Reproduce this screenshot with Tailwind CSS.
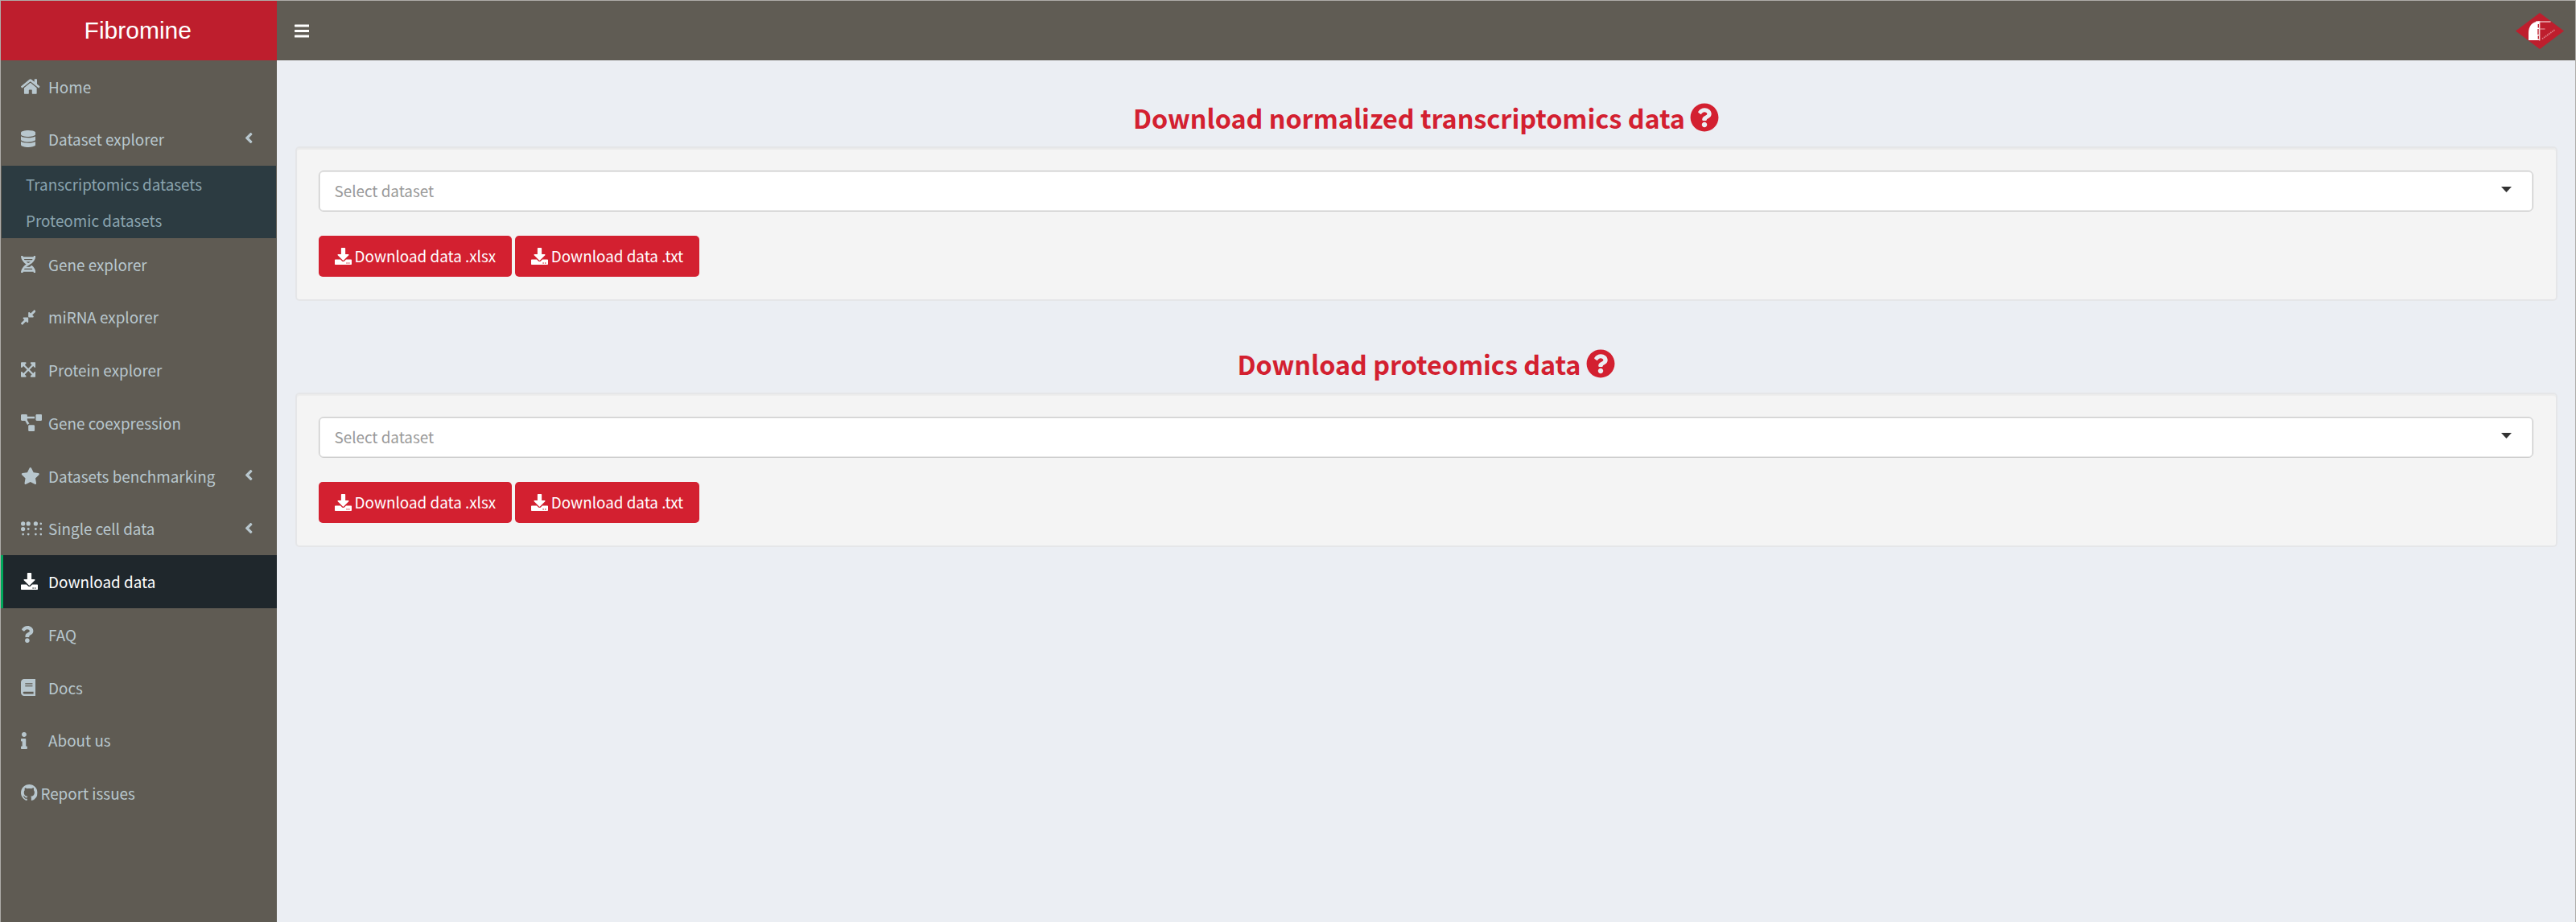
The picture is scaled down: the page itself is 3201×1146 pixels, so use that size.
<!DOCTYPE html>
<html lang="en">
<head>
<meta charset="utf-8">
<title>Fibromine</title>
<script src="https://cdn.jsdelivr.net/npm/@tailwindcss/browser@4"></script>
</head>
<body class="h-[1146px] w-[3201px] overflow-hidden bg-[#ebeef3] font-['Noto_Sans_CJK_SC',sans-serif] text-[18.85px]">
<svg class="hidden">
  <symbol id="home" viewBox="0 0 576 512"><path d="M280.37 148.26L96 300.11V464a16 16 0 0 0 16 16l112.06-.29a16 16 0 0 0 15.92-16V368a16 16 0 0 1 16-16h64a16 16 0 0 1 16 16v95.64a16 16 0 0 0 16 16.05L464 480a16 16 0 0 0 16-16V300L295.67 148.26a12.19 12.19 0 0 0-15.3 0zM571.6 251.47L488 182.56V44.05a12 12 0 0 0-12-12h-56a12 12 0 0 0-12 12v72.61L318.47 43a48 48 0 0 0-61 0L4.34 251.47a12 12 0 0 0-1.6 16.9l25.5 31A12 12 0 0 0 45.15 301l235.22-193.74a12.19 12.19 0 0 1 15.3 0L530.9 301a12 12 0 0 0 16.9-1.6l25.5-31a12 12 0 0 0-1.7-16.93z"/></symbol>
  <symbol id="database" viewBox="0 0 448 512"><path d="M448 73.143v45.714C448 159.143 347.667 192 224 192S0 159.143 0 118.857V73.143C0 32.857 100.333 0 224 0s224 32.857 224 73.143zM448 176v102.857C448 319.143 347.667 352 224 352S0 319.143 0 278.857V176c48.125 33.143 136.208 48.572 224 48.572S399.874 209.143 448 176zm0 160v102.857C448 479.143 347.667 512 224 512S0 479.143 0 438.857V336c48.125 33.143 136.208 48.572 224 48.572S399.874 369.143 448 336z"/></symbol>
  <symbol id="dna" viewBox="0 0 448 512"><path d="M.1 494.1c-1.1 9.5 6.3 17.8 15.9 17.8l32.3.1c8.1 0 14.9-5.9 16-13.9.7-4.9 1.8-11.1 3.4-18.1H380c1.6 6.9 2.9 13.2 3.5 18.1 1.1 8 7.9 14 16 13.9l32.3-.1c9.6 0 17.1-8.3 15.9-17.8-4.6-37.9-25.6-129-118.9-207.7-17.6 12.4-37.1 24.2-58.5 35.4 6.2 4.6 11.4 9.4 17 14.2H159.7c21.3-18.1 47-35.6 78.7-51.4C410.5 199.1 442.1 65.8 447.9 17.9 449 8.4 441.6.1 432 .1L399.6 0c-8.1 0-14.9 5.9-16 13.9-.7 4.9-1.8 11.1-3.4 18.1H67.8c-1.6-7-2.7-13.1-3.4-18.1-1.1-8-7.9-14-16-13.9L16.1.1C6.5.1-1 8.4.1 17.9 5.3 60.8 31.4 171.8 160 256 31.5 340.2 5.3 451.2.1 494.1zM224 219.6c-25.1-13.7-46.4-28.4-64.3-43.6h128.5c-17.8 15.2-39.1 30-64.2 43.6zM355.1 96c-5.8 10.4-12.8 21.1-21 32H114c-8.3-10.9-15.3-21.6-21-32h262.1zM92.9 416c5.8-10.4 12.8-21.1 21-32h219.4c8.3 10.9 15.4 21.6 21.2 32H92.9z"/></symbol>
  <symbol id="compress" viewBox="0 0 448 512"><path d="M4.686 427.314L104 328l-32.922-31.029C55.958 281.851 66.666 256 88.048 256h112C213.303 256 224 266.745 224 280v112c0 21.382-25.803 32.09-40.922 16.971L152 376l-99.314 99.314c-6.248 6.248-16.379 6.248-22.627 0L4.686 449.941c-6.248-6.248-6.248-16.379 0-22.627zM443.314 84.686L344 184l32.922 31.029c15.12 15.12 4.412 40.971-16.97 40.971h-112C234.697 256 224 245.255 224 232V120c0-21.382 25.803-32.09 40.922-16.971L296 136l99.314-99.314c6.248-6.248 16.379-6.248 22.627 0l25.373 25.373c6.248 6.248 6.248 16.379 0 22.627z"/></symbol>
  <symbol id="expand" viewBox="0 0 448 512"><path d="M448 344v112a23.94 23.94 0 0 1-24 24H312c-21.39 0-32.09-25.9-17-41l36.2-36.2L224 295.6 116.77 402.9 153 439c15.09 15.1 4.39 41-17 41H24a23.94 23.94 0 0 1-24-24V344c0-21.4 25.89-32.1 41-17l36.19 36.2L184.46 256 77.18 148.7 41 185c-15.1 15.1-41 4.4-41-17V56a23.94 23.94 0 0 1 24-24h112c21.39 0 32.09 25.9 17 41l-36.2 36.2L224 216.4l107.23-107.3L295 73c-15.09-15.1-4.39-41 17-41h112a23.94 23.94 0 0 1 24 24v112c0 21.4-25.89 32.1-41 17l-36.19-36.2L263.54 256l107.28 107.3L407 327.1c15.1-15.2 41-4.5 41 16.9z"/></symbol>
  <symbol id="diagram" viewBox="0 0 640 512"><path d="M384 320H256c-17.67 0-32 14.33-32 32v128c0 17.67 14.33 32 32 32h128c17.67 0 32-14.33 32-32V352c0-17.67-14.33-32-32-32zM192 32c0-17.67-14.33-32-32-32H32C14.33 0 0 14.33 0 32v128c0 17.67 14.33 32 32 32h95.72l73.16 128.04C211.98 300.98 232.4 288 256 288h.28L192 175.51V128h224V64H192V32zM608 0H480c-17.67 0-32 14.33-32 32v128c0 17.67 14.33 32 32 32h128c17.67 0 32-14.33 32-32V32c0-17.67-14.33-32-32-32z"/></symbol>
  <symbol id="star" viewBox="0 0 576 512"><path d="M259.3 17.8L194 150.2 47.9 171.5c-26.2 3.8-36.7 36.1-17.7 54.6l105.7 103-25 145.5c-4.5 26.3 23.2 46 46.4 33.7L288 439.6l130.7 68.7c23.2 12.2 50.9-7.4 46.4-33.7l-25-145.5 105.7-103c19-18.5 8.5-50.8-17.7-54.6L382 150.2 316.7 17.8c-11.7-23.6-45.6-23.9-57.4 0z"/></symbol>
  <symbol id="braille" viewBox="0 0 640 512"><circle cx="64" cy="96" r="64"/><circle cx="224" cy="96" r="64"/><circle cx="64" cy="256" r="64"/><circle cx="448" cy="96" r="64"/><circle cx="224" cy="256" r="34"/><circle cx="64" cy="416" r="34"/><circle cx="224" cy="416" r="34"/><circle cx="448" cy="256" r="34"/><circle cx="448" cy="416" r="34"/><circle cx="606" cy="96" r="34"/><circle cx="606" cy="256" r="34"/><circle cx="606" cy="416" r="34"/></symbol>
  <symbol id="download" viewBox="0 0 512 512"><path d="M216 0h80c13.3 0 24 10.7 24 24v168h87.7c17.8 0 26.7 21.5 14.1 34.1L269.7 378.3c-7.5 7.5-19.8 7.5-27.3 0L90.1 226.1c-12.6-12.6-3.7-34.1 14.1-34.1H192V24c0-13.3 10.7-24 24-24zm296 376v112c0 13.3-10.7 24-24 24H24c-13.3 0-24-10.7-24-24V376c0-13.3 10.7-24 24-24h146.7l49 49c20.1 20.1 52.5 20.1 72.6 0l49-49H488c13.3 0 24 10.7 24 24zm-124 88c0-11-9-20-20-20s-20 9-20 20 9 20 20 20 20-9 20-20zm64 0c0-11-9-20-20-20s-20 9-20 20 9 20 20 20 20-9 20-20z"/></symbol>
  <symbol id="question" viewBox="0 0 384 512"><path d="M202.021 0C122.202 0 70.503 32.703 29.914 91.026c-7.363 10.58-5.093 25.086 5.178 32.874l43.138 32.709c10.373 7.865 25.132 6.026 33.253-4.148 25.049-31.381 43.63-49.449 82.757-49.449 30.764 0 68.816 19.799 68.816 49.631 0 22.552-18.617 34.134-48.993 51.164-35.423 19.86-82.299 44.576-82.299 106.405V320c0 13.255 10.745 24 24 24h72.471c13.255 0 24-10.745 24-24v-5.773c0-42.86 125.268-44.645 125.268-160.627C377.504 66.256 286.902 0 202.021 0zM192 373.459c-38.196 0-69.271 31.075-69.271 69.271 0 38.195 31.075 69.27 69.271 69.27s69.271-31.075 69.271-69.271-31.075-69.27-69.271-69.27z"/></symbol>
  <symbol id="book" viewBox="0 0 448 512"><path d="M448 360V24c0-13.3-10.7-24-24-24H96C43 0 0 43 0 96v320c0 53 43 96 96 96h328c13.3 0 24-10.7 24-24v-16c0-7.5-3.5-14.3-8.9-18.7-4.2-15.4-4.2-59.3 0-74.7 5.4-4.3 8.9-11.1 8.9-18.6zM128 134c0-3.3 2.7-6 6-6h212c3.3 0 6 2.7 6 6v20c0 3.3-2.7 6-6 6H134c-3.3 0-6-2.7-6-6v-20zm0 64c0-3.3 2.7-6 6-6h212c3.3 0 6 2.7 6 6v20c0 3.3-2.7 6-6 6H134c-3.3 0-6-2.7-6-6v-20zm253.4 250H96c-17.7 0-32-14.3-32-32 0-17.6 14.4-32 32-32h285.4c-1.9 17.1-1.9 46.9 0 64z"/></symbol>
  <symbol id="info" viewBox="0 0 192 512"><path d="M20 424.229h20V279.771H20c-11.046 0-20-8.954-20-20V212c0-11.046 8.954-20 20-20h112c11.046 0 20 8.954 20 20v212.229h20c11.046 0 20 8.954 20 20V492c0 11.046-8.954 20-20 20H20c-11.046 0-20-8.954-20-20v-47.771c0-11.046 8.954-20 20-20zM96 0C56.235 0 24 32.235 24 72s32.235 72 72 72 72-32.235 72-72S135.764 0 96 0z"/></symbol>
  <symbol id="github" viewBox="0 0 16 16"><path d="M8 0C3.58 0 0 3.58 0 8c0 3.54 2.29 6.53 5.47 7.59.4.07.55-.17.55-.38 0-.19-.01-.82-.01-1.49-2.01.37-2.53-.49-2.69-.94-.09-.23-.48-.94-.82-1.13-.28-.15-.68-.52-.01-.53.63-.01 1.08.58 1.23.82.72 1.21 1.87.87 2.33.66.07-.52.28-.87.51-1.07-1.78-.2-3.64-.89-3.64-3.95 0-.87.31-1.59.82-2.15-.08-.2-.36-1.02.08-2.12 0 0 .67-.21 2.2.82.64-.18 1.32-.27 2-.27s1.36.09 2 .27c1.53-1.04 2.2-.82 2.2-.82.44 1.1.16 1.92.08 2.12.51.56.82 1.27.82 2.15 0 3.07-1.87 3.75-3.65 3.95.29.25.54.73.54 1.48 0 1.07-.01 1.93-.01 2.2 0 .21.15.46.55.38A8.01 8.01 0 0 0 16 8c0-4.42-3.58-8-8-8z"/></symbol>
  <symbol id="angle" viewBox="0 0 256 512"><path d="M31.7 239l136-136c9.4-9.4 24.6-9.4 33.9 0l22.6 22.6c9.4 9.4 9.4 24.6 0 33.9L127.9 256l96.4 96.4c9.4 9.4 9.4 24.6 0 33.9L201.7 409c-9.4 9.4-24.6 9.4-33.9 0l-136-136c-9.5-9.4-9.5-24.6-.1-34z"/></symbol>
  <symbol id="help" viewBox="0 0 512 512"><path d="M504 256c0 136.997-111.043 248-248 248S8 392.997 8 256C8 119.083 119.043 8 256 8s248 111.083 248 248zM262.655 90c-54.497 0-89.255 22.957-116.549 63.758-3.536 5.286-2.353 12.415 2.715 16.258l34.699 26.31c5.205 3.947 12.621 3.008 16.665-2.122 17.864-22.658 30.113-35.797 57.303-35.797 20.429 0 45.698 13.148 45.698 32.958 0 14.976-12.363 22.667-32.534 33.976C247.128 238.528 216 254.941 216 296v4c0 6.627 5.373 12 12 12h56c6.627 0 12-5.373 12-12v-1.333c0-28.462 83.186-29.647 83.186-106.667 0-58.002-60.165-102-116.531-102zM256 338c-25.365 0-46 20.635-46 46 0 25.364 20.635 46 46 46s46-20.636 46-46c0-25.365-20.635-46-46-46z"/></symbol>
</svg>

<div class="flex h-full w-full flex-col border-t border-r border-l border-[#aeaca8]">
  <header class="flex h-[74px] shrink-0 bg-[#605c54]">
    <a class="flex w-[342.5px] items-center justify-center bg-[#be1e2d] pr-0.5 font-['Liberation_Sans',sans-serif] text-[30px] leading-[74px] text-white">Fibromine</a>
    <div class="flex flex-1 items-center justify-between pr-[14px] pl-[22.5px]">
      <svg class="h-[21px] w-[18.4px] fill-white" viewBox="0 0 448 512"><rect y="60" width="448" height="72" rx="16"/><rect y="220" width="448" height="72" rx="16"/><rect y="380" width="448" height="72" rx="16"/></svg>
      <svg class="h-[45px] w-[60px]" viewBox="0 0 60 45">
        <path d="M30 0L60 22.500L30 45L0 22.500z" fill="#be1e2d"/>
        <path d="M29.500 10.300C20 11 16 17 16 25v9h13.500z" fill="#fff"/>
        <path d="M28.300 14v4.500M28 20v7M28.300 28.500v4" stroke="#be1e2d" stroke-width="1.400"/>
        <path d="M25 11h18.500M29.800 10.500v24" stroke="#fff" stroke-width="1"/>
        <path d="M30 20h6.500" stroke="#eaa9ae" stroke-width="1"/>
        <path d="M33 32.300L49 20.800" stroke="#dc8088" stroke-width="1.800" stroke-dasharray="1.600 0.900"/>
      </svg>
    </div>
  </header>

  <div class="flex min-h-0 flex-1">
    <aside class="w-[342.5px] shrink-0 bg-[#5f5b53] fill-[#b8c7ce] text-[#b8c7ce]">
      <a class="flex h-[65.6px] items-center pl-[25px]"><span class="w-[34.1px] pb-px"><svg class="h-[21px] w-[23.6px]"><use href="#home"/></svg></span>Home</a>
      <a class="flex h-[65.6px] items-center pl-[25px]"><span class="w-[34.1px] pb-px"><svg class="h-[21px] w-[18.4px]"><use href="#database"/></svg></span>Dataset explorer<svg class="mr-[29px] mb-[3px] ml-auto h-[21px] w-[10.5px]"><use href="#angle"/></svg></a>
      <div class="mx-px bg-[#2c3b41] pt-px text-[#8aa4af]">
        <a class="flex h-[44.2px] items-center pl-[30px]">Transcriptomics datasets</a>
        <a class="flex h-[44.6px] items-center pl-[30px]">Proteomic datasets</a>
      </div>
      <a class="flex h-[65.75px] items-center pl-[25px]"><span class="w-[34.1px] pb-px"><svg class="h-[21px] w-[18.4px]"><use href="#dna"/></svg></span>Gene explorer</a>
      <a class="flex h-[65.75px] items-center pl-[25px]"><span class="w-[34.1px] pb-px"><svg class="h-[21px] w-[18.4px]"><use href="#compress"/></svg></span>miRNA explorer</a>
      <a class="flex h-[65.75px] items-center pl-[25px]"><span class="w-[34.1px] pb-px"><svg class="h-[21px] w-[18.4px]"><use href="#expand"/></svg></span>Protein explorer</a>
      <a class="flex h-[65.75px] items-center pl-[25px]"><span class="w-[34.1px] pb-px"><svg class="h-[21px] w-[26.25px]"><use href="#diagram"/></svg></span>Gene coexpression</a>
      <a class="flex h-[65.75px] items-center pl-[25px]"><span class="w-[34.1px] pb-px"><svg class="h-[21px] w-[23.6px]"><use href="#star"/></svg></span>Datasets benchmarking<svg class="mr-[29px] mb-[3px] ml-auto h-[21px] w-[10.5px]"><use href="#angle"/></svg></a>
      <a class="flex h-[65.75px] items-center pl-[25px]"><span class="w-[34.1px] pb-px"><svg class="h-[21px] w-[26.25px]"><use href="#braille"/></svg></span>Single cell data<svg class="mr-[29px] mb-[3px] ml-auto h-[21px] w-[10.5px]"><use href="#angle"/></svg></a>
      <a class="flex h-[65.75px] items-center border-l-3 border-[#00a65a] bg-[#1f272c] fill-white pl-[22px] text-white"><span class="w-[34.1px] pb-px"><svg class="h-[21px] w-[21px]"><use href="#download"/></svg></span>Download data</a>
      <a class="flex h-[65.75px] items-center pl-[25px]"><span class="w-[34.1px] pb-px"><svg class="h-[21px] w-[15.75px]"><use href="#question"/></svg></span>FAQ</a>
      <a class="flex h-[65.75px] items-center pl-[25px]"><span class="w-[34.1px] pb-px"><svg class="h-[21px] w-[18.4px]"><use href="#book"/></svg></span>Docs</a>
      <a class="flex h-[65.75px] items-center pl-[25px]"><span class="w-[34.1px] pb-px"><svg class="h-[21px] w-[7.9px]"><use href="#info"/></svg></span>About us</a>
      <a class="flex h-[65.75px] items-center pl-[25px]"><span class="w-[24.4px] pb-[2px]"><svg class="h-[20.6px] w-[20.6px]"><use href="#github"/></svg></span>Report issues</a>
    </aside>

    <main class="flex-1 pt-[51px] pr-[22.5px] pl-[23px]">
      <h2 class="mb-4 flex items-center justify-center gap-[6.2px] text-[32.3px] leading-[40px] font-bold text-[#d32030]">Download normalized transcriptomics data<svg class="h-9 w-9 fill-[#d32030]"><use href="#help"/></svg></h2>
      <section class="mb-[58.5px] h-[191.5px] rounded-[5px] border-2 border-[#e5e6e8] bg-[#f4f4f4] px-[27.5px] pt-7 shadow-[inset_0_2px_1px_rgba(0,0,0,0.04)]">
        <div class="flex h-[50.5px] items-center justify-between rounded-md border border-[#c9c9c9] bg-white pr-[26px] pl-[18.5px] text-[#999] shadow-[inset_0_0_0_1px_#eaeaea]">Select dataset<svg class="mb-[3px] h-[7px] w-[13px] fill-[#333]" viewBox="0 0 13 7"><path d="M0 0h13L6.500 7z"/></svg></div>
        <div class="mt-[30px] flex gap-1 fill-white text-white">
          <button class="flex h-[51px] items-center rounded-[5px] bg-[#d32030] px-5"><svg class="mr-[3.600px] h-[21px] w-[21px]"><use href="#download"/></svg>Download data .xlsx</button>
          <button class="flex h-[51px] items-center rounded-[5px] bg-[#d32030] px-5"><svg class="mr-[3.600px] h-[21px] w-[21px]"><use href="#download"/></svg>Download data .txt</button>
        </div>
      </section>
      <h2 class="mb-4 flex items-center justify-center gap-[6.2px] text-[32.3px] leading-[40px] font-bold text-[#d32030]">Download proteomics data<svg class="h-9 w-9 fill-[#d32030]"><use href="#help"/></svg></h2>
      <section class="h-[191.5px] rounded-[5px] border-2 border-[#e5e6e8] bg-[#f4f4f4] px-[27.5px] pt-7 shadow-[inset_0_2px_1px_rgba(0,0,0,0.03)]">
        <div class="flex h-[50.5px] items-center justify-between rounded-md border border-[#c9c9c9] bg-white pr-[26px] pl-[18.5px] text-[#999] shadow-[inset_0_0_0_1px_#eaeaea]">Select dataset<svg class="mb-[3px] h-[7px] w-[13px] fill-[#333]" viewBox="0 0 13 7"><path d="M0 0h13L6.500 7z"/></svg></div>
        <div class="mt-[30px] flex gap-1 fill-white text-white">
          <button class="flex h-[51px] items-center rounded-[5px] bg-[#d32030] px-5"><svg class="mr-[3.600px] h-[21px] w-[21px]"><use href="#download"/></svg>Download data .xlsx</button>
          <button class="flex h-[51px] items-center rounded-[5px] bg-[#d32030] px-5"><svg class="mr-[3.600px] h-[21px] w-[21px]"><use href="#download"/></svg>Download data .txt</button>
        </div>
      </section>
    </main>
  </div>
</div>
</body>
</html>
